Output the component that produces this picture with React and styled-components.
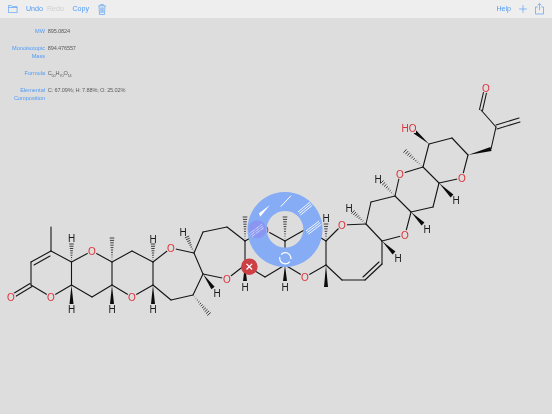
import React from 'react';
import styled, { createGlobalStyle } from 'styled-components';

const GlobalStyle = createGlobalStyle`
  html, body {
    margin: 0;
    padding: 0;
    background: #dddddd;
    font-family: "Liberation Sans", Arial, sans-serif;
  }
`;

const bonds = [
  [51, 227, 51, 251], [51, 251, 31, 262], [50, 256, 34, 265], [31, 262, 31, 285],
  [31, 285, 51, 297], [51, 297, 71.5, 285], [71.5, 285, 71.5, 262], [71.5, 262, 51, 251],
  [71.5, 262, 92, 251], [92, 251, 112, 262], [112, 262, 112, 285], [112, 285, 92, 297],
  [92, 297, 71.5, 285], [112, 262, 132, 251], [132, 251, 153, 262], [153, 262, 153, 285],
  [153, 285, 132, 297], [132, 297, 112, 285], [153, 262, 171, 248], [171, 248, 194, 253],
  [194, 253, 203, 232], [203, 232, 227, 227], [227, 227, 245, 241], [245, 241, 245, 265],
  [245, 265, 227, 279], [227, 279, 203, 274], [203, 274, 194, 253], [203, 274, 193, 295],
  [193, 295, 171, 300], [171, 300, 153, 285], [245, 241, 265, 230], [265, 230, 285, 241],
  [285, 241, 285, 265], [285, 265, 265, 277], [265, 277, 245, 265], [285, 265, 305, 277],
  [305, 277, 326, 265], [326, 265, 326, 241], [326, 241, 306, 229], [306, 229, 285, 241],
  [326, 241, 342, 225], [342, 225, 366, 224], [366, 224, 382, 241], [382, 241, 382, 264],
  [382, 264, 365, 280], [379, 262, 363, 277], [365, 280, 342, 280], [342, 280, 326, 265],
  [366, 224, 371, 202], [371, 202, 395, 196], [395, 196, 411, 212], [411, 212, 405, 235],
  [405, 235, 382, 241], [395, 196, 400, 174], [400, 174, 423, 167], [423, 167, 439, 183],
  [439, 183, 433, 207], [433, 207, 411, 212], [423, 167, 429, 144], [429, 144, 452, 138],
  [452, 138, 468, 155], [468, 155, 462, 178], [462, 178, 439, 183], [491, 149, 496, 127],
  [497, 129, 520, 122], [496, 125, 519, 118], [496, 127, 481, 110],
  [479.5, 109.5, 484.5, 88], [482.5, 110.5, 487.5, 88.5],
  [30, 283.5, 11, 295], [32, 286.5, 13, 298],
];

const wedges = [
  [71.5, 285, 71.5, 304], [112, 285, 112, 304], [153, 285, 153, 304], [203, 274, 213, 288],
  [245, 265, 245, 281], [285, 265, 285, 281], [326, 265, 326, 287], [382, 241, 394, 253],
  [411, 212, 423, 224], [439, 183, 452, 196], [429, 144, 415, 132], [468, 155, 491, 149],
];

const hashes = [
  [71.5, 262, 71.5, 244], [112, 262, 112, 238], [153, 262, 153, 244], [194, 253, 187, 237],
  [193, 295, 209, 314], [245, 241, 245, 217], [285, 241, 285, 217], [326, 241, 326, 224],
  [366, 224, 353, 212], [395, 196, 382, 182], [423, 167, 405, 151],
];

const atoms = [
  ['O', 11, 297, 'o'], ['O', 51, 297, 'o'], ['O', 92, 251, 'o'], ['O', 132, 297, 'o'],
  ['O', 171, 248, 'o'], ['O', 227, 279, 'o'], ['O', 265, 230, 'o'], ['O', 305, 277, 'o'],
  ['O', 342, 225, 'o'], ['O', 405, 235, 'o'], ['O', 400, 174, 'o'], ['O', 462, 178, 'o'],
  ['O', 486, 88, 'o'],
  ['H', 71.5, 238], ['H', 71.5, 309], ['H', 112, 309], ['H', 153, 239], ['H', 153, 309],
  ['H', 183, 232], ['H', 217, 293], ['H', 245, 287], ['H', 285, 287], ['H', 326, 218],
  ['H', 349, 208], ['H', 378, 179], ['H', 398, 258], ['H', 427, 229], ['H', 456, 200],
];

const wedgePoints = ([x1, y1, x2, y2]) => {
  const len = Math.hypot(x2 - x1, y2 - y1);
  const nx = (-(y2 - y1) / len) * 2;
  const ny = ((x2 - x1) / len) * 2;
  return `${x1},${y1} ${x2 + nx},${y2 + ny} ${x2 - nx},${y2 - ny}`;
};

const hashLines = ([x1, y1, x2, y2]) => {
  const len = Math.hypot(x2 - x1, y2 - y1);
  const count = Math.round(len / 2.3);
  const ux = (x2 - x1) / len;
  const uy = (y2 - y1) / len;
  return Array.from({ length: count }, (_, i) => {
    const t = ((i + 1) / count) * len;
    const w = (t / len) * 2.3;
    return [x1 + ux * t - uy * w, y1 + uy * t + ux * w, x1 + ux * t + uy * w, y1 + uy * t - ux * w];
  });
};

const Molecule = () => (
  <MoleculeSvg viewBox="0 0 552 414">
    <g stroke="#151515" strokeWidth="1.1" strokeLinecap="round">
      {bonds.map((b, i) => (
        <line key={i} x1={b[0]} y1={b[1]} x2={b[2]} y2={b[3]} />
      ))}
      {hashes.flatMap((h, i) =>
        hashLines(h).map((l, j) => (
          <line key={`${i}-${j}`} x1={l[0]} y1={l[1]} x2={l[2]} y2={l[3]} strokeWidth="0.8" strokeLinecap="butt" />
        ))
      )}
    </g>
    {wedges.map((w, i) => (
      <polygon key={i} points={wedgePoints(w)} fill="#0c0c0c" />
    ))}
    {atoms.map(([label, x, y, kind], i) => (
      <g key={i}>
        <circle cx={x} cy={y} r={kind ? 5 : 4} fill="#dddddd" />
        <AtomLabel x={x} y={y + 3.6} $oxygen={!!kind}>
          {label}
        </AtomLabel>
      </g>
    ))}
    <rect x="401" y="123" width="15" height="10" fill="#dddddd" />
    <AtomLabel x="409" y="131.6" $oxygen>
      HO
    </AtomLabel>
  </MoleculeSvg>
);

const BondRing = () => (
  <RingSvg viewBox="0 0 552 414">
    <path
      fillRule="evenodd"
      fill="#85acf4"
      d="M285 192a37.5 37.5 0 1 0 0.01 0zM285 211a18.3 18.3 0 1 1 -0.01 0z"
    />
    <circle cx="257.3" cy="229.3" r="9" fill="#8a96f2" />
    <polygon points="259,213.3 260.2,216.7 270,205" fill="#fff" />
    <line x1="280.7" y1="206.7" x2="291" y2="195.7" stroke="#fff" strokeWidth="1" />
    <g stroke="#fff" strokeWidth="0.9">
      <line x1="298" y1="212" x2="310" y2="202" />
      <line x1="299.2" y1="213.6" x2="311.2" y2="203.6" />
      <line x1="300.4" y1="215.2" x2="312.4" y2="205.2" />
      <line x1="306" y1="231" x2="319" y2="221" />
      <line x1="307.2" y1="232.6" x2="320.2" y2="222.6" />
      <line x1="308.4" y1="234.2" x2="321.4" y2="224.2" />
      <line x1="249.5" y1="233.5" x2="261.5" y2="224.5" strokeDasharray="0.9 0.7" />
      <line x1="250.7" y1="235" x2="262.7" y2="226" strokeDasharray="0.9 0.7" />
      <line x1="252" y1="236.5" x2="264" y2="227.5" strokeDasharray="0.9 0.7" />
    </g>
    <circle cx="285.3" cy="258.3" r="5.6" fill="none" stroke="#fff" strokeWidth="1.2" strokeDasharray="15 2.6" strokeDashoffset="-3.5" />
    <circle cx="249.3" cy="266.7" r="8.3" fill="#cc3f45" />
    <path d="M246.5 263.9l5.6 5.6M252.1 263.9l-5.6 5.6" stroke="#fff" strokeWidth="1.3" />
  </RingSvg>
);

const info = [
  { label: ['MW'], value: '895.0824' },
  { label: ['Monoisotopic', 'Mass'], value: '894.476557' },
  {
    label: ['Formula'],
    value: (
      <>
        C<sub>50</sub>H<sub>70</sub>O<sub>14</sub>
      </>
    ),
  },
  { label: ['Elemental', 'Composition'], value: 'C: 67.09%; H: 7.88%; O: 25.02%' },
];

export default function App() {
  return (
    <Page>
      <GlobalStyle />
      <Toolbar>
        <ToolGroup>
          <Icon width="9.5" height="8" viewBox="0 0 9.5 8">
            <path d="M.4 7.6V.5h2.9l1 1.1h4.8v6z M.4 2.5h8.7" />
          </Icon>
          <UndoRedo>
            <ToolButton>Undo</ToolButton>
            <ToolButton $disabled>Redo</ToolButton>
          </UndoRedo>
          <ToolButton>Copy</ToolButton>
          <Icon width="8" height="11" viewBox="0 0 8 11">
            <path d="M.3 1.8h7.4M2.7 1.8V.5h2.6v1.3M1 1.8l.5 8.7h5l.5-8.7M2.9 3.4v5.6M4 3.4v5.6M5.1 3.4v5.6" />
          </Icon>
        </ToolGroup>
        <ToolGroup $right>
          <ToolButton>Help</ToolButton>
          <Icon width="8" height="8" viewBox="0 0 8 8">
            <path d="M4 .2v7.6M.2 4h7.6" />
          </Icon>
          <Icon width="9" height="11.5" viewBox="0 0 9 11.5">
            <path d="M2.7 4H.5v7h8V4H6.3M4.5 7.2V.6M2.6 2.3L4.5.5l1.9 1.8" />
          </Icon>
        </ToolGroup>
      </Toolbar>
      <Canvas>
        <Molecule />
        <BondRing />
        <InfoList>
          {info.map((row) => (
            <InfoRow key={row.label[0]}>
              <InfoLabel>
                {row.label.map((line) => (
                  <div key={line}>{line}</div>
                ))}
              </InfoLabel>
              <InfoValue>{row.value}</InfoValue>
            </InfoRow>
          ))}
        </InfoList>
      </Canvas>
    </Page>
  );
}

const Page = styled.div`
  width: 552px;
  height: 414px;
  display: flex;
  flex-direction: column;
  overflow: hidden;
  background: #dddddd;
`;

const Toolbar = styled.div`
  height: 18px;
  flex: none;
  display: flex;
  align-items: center;
  justify-content: space-between;
  padding: 0 8px;
  background: #eeeeee;
  will-change: transform;
`;

const ToolGroup = styled.div`
  display: flex;
  align-items: center;
  gap: ${(props) => (props.$right ? '8px' : '8.5px')};
`;

const UndoRedo = styled.div`
  display: flex;
  gap: 4px;
`;

const ToolButton = styled.span`
  font-size: 7.1px;
  color: ${(props) => (props.$disabled ? '#cfcfcf' : '#4f9bf5')};
`;

const Icon = styled.svg`
  fill: none;
  stroke: #6aa8f5;
  stroke-width: 0.8;
  flex: none;
`;

const Canvas = styled.div`
  position: relative;
  flex: 1;
`;

const MoleculeSvg = styled.svg`
  position: absolute;
  left: 0;
  top: -18px;
  width: 552px;
  height: 414px;
  will-change: transform;
`;

const RingSvg = styled(MoleculeSvg)``;

const AtomLabel = styled.text`
  font-family: "Liberation Sans", Arial, sans-serif;
  font-size: 10px;
  text-anchor: middle;
  fill: ${(props) => (props.$oxygen ? '#dc2f36' : '#1c1c1c')};
`;

const InfoList = styled.div`
  position: relative;
  display: flex;
  flex-direction: column;
  gap: 9px;
  padding-top: 9px;
  will-change: transform;
`;

const InfoRow = styled.div`
  display: flex;
  gap: 2.7px;
  font-size: 5.6px;
  line-height: 8px;
`;

const InfoLabel = styled.div`
  width: 45px;
  text-align: right;
  color: #4f9bf5;
`;

const InfoValue = styled.div`
  color: #5c5c5c;
  letter-spacing: -0.14px;

  sub {
    font-size: 3.8px;
    line-height: 0;
  }
`;
